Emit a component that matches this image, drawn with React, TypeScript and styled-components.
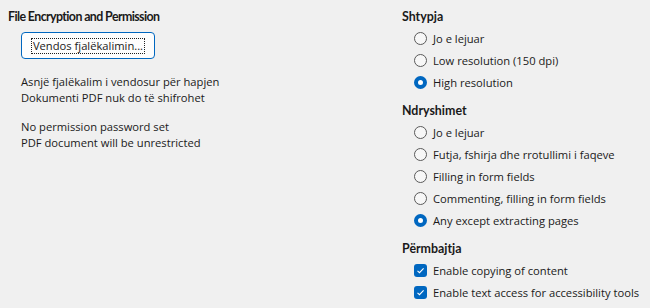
import React from 'react'
import styled, { createGlobalStyle } from 'styled-components'

const GlobalStyle = createGlobalStyle`
  html, body {
    margin: 0;
    padding: 0;
    background: #f0f0f0;
  }
  body {
    font-family: "Open Sans", "Noto Sans", sans-serif;
    font-size: 11.2px;
    color: #1a1a1a;
  }
`

const Page = styled.div`
  width: 650px;
  height: 308px;
  box-sizing: border-box;
  padding: 8px 0 0 8px;
  display: grid;
  grid-template-columns: 394px 1fr;
  overflow: hidden;
`

const Column = styled.div`
  display: flex;
  flex-direction: column;
`

const Heading = styled.div<{ $gap?: number; $tight?: boolean }>`
  font-family: Lato, "Open Sans", sans-serif;
  font-weight: 700;
  font-size: 12.4px;
  letter-spacing: ${(p) => (p.$tight ? '-0.6px' : '0')};
  line-height: 18px;
  height: 18px;
  margin-top: ${(p) => p.$gap ?? 0}px;
  margin-bottom: 1px;
  white-space: nowrap;
`

const Button = styled.button`
  margin: 5px 0 0 13px;
  width: 134px;
  height: 27px;
  padding: 0;
  box-sizing: border-box;
  background: #fdfdfd;
  border: 1px solid #0067c0;
  border-radius: 4px;
  font: inherit;
  color: #1a1a1a;
  display: flex;
  align-items: center;
  justify-content: center;
`

const FocusRing = styled.span`
  border: 1px dotted #202020;
  padding: 0 1px;
  line-height: 14px;
  white-space: nowrap;
`

const Note = styled.div<{ $gap: number }>`
  margin: ${(p) => p.$gap}px 0 0 13px;
  line-height: 16px;
`

const Options = styled.div`
  display: flex;
  flex-direction: column;
  padding-left: 12px;
`

const Row = styled.label`
  display: flex;
  align-items: center;
  gap: 6px;
  height: 22px;
  white-space: nowrap;
`

const RadioMark = styled.span<{ $on?: boolean }>`
  width: 13px;
  height: 13px;
  box-sizing: border-box;
  border-radius: 50%;
  flex: none;
  border: ${(p) => (p.$on ? '4px solid #0067c0' : '1px solid #5a5a5a')};
  background: ${(p) => (p.$on ? '#ffffff' : '#f7f7f7')};
`

const CheckMark = styled.span`
  width: 13px;
  height: 13px;
  border-radius: 3px;
  background: #0067c0;
  flex: none;
  display: flex;
  align-items: center;
  justify-content: center;
`

const Radio = ({ on, children }: { on?: boolean; children: React.ReactNode }) => (
  <Row>
    <RadioMark $on={on} />
    {children}
  </Row>
)

const Check = ({ children }: { children: React.ReactNode }) => (
  <Row>
    <CheckMark>
      <svg width="9" height="9" viewBox="0 0 9 9">
        <path d="M1.5 4.8 L3.5 6.7 L7.6 2.3" fill="none" stroke="#fff" strokeWidth="1.1" />
      </svg>
    </CheckMark>
    {children}
  </Row>
)

export default function App() {
  return (
    <>
      <GlobalStyle />
      <Page>
        <Column>
          <Heading $tight>File Encryption and Permission</Heading>
          <Button>
            <FocusRing>Vendos fjalëkalimin...</FocusRing>
          </Button>
          <Note $gap={15}>
            Asnjë fjalëkalim i vendosur për hapjen
            <br />
            Dokumenti PDF nuk do të shifrohet
          </Note>
          <Note $gap={13}>
            No permission password set
            <br />
            PDF document will be unrestricted
          </Note>
        </Column>
        <Column>
          <Heading>Shtypja</Heading>
          <Options>
            <Radio>Jo e lejuar</Radio>
            <Radio>Low resolution (150 dpi)</Radio>
            <Radio on>High resolution</Radio>
          </Options>
          <Heading $gap={9}>Ndryshimet</Heading>
          <Options>
            <Radio>Jo e lejuar</Radio>
            <Radio>Futja, fshirja dhe rrotullimi i faqeve</Radio>
            <Radio>Filling in form fields</Radio>
            <Radio>Commenting, filling in form fields</Radio>
            <Radio on>Any except extracting pages</Radio>
          </Options>
          <Heading $gap={9}>Përmbajtja</Heading>
          <Options>
            <Check>Enable copying of content</Check>
            <Check>Enable text access for accessibility tools</Check>
          </Options>
        </Column>
      </Page>
    </>
  )
}
